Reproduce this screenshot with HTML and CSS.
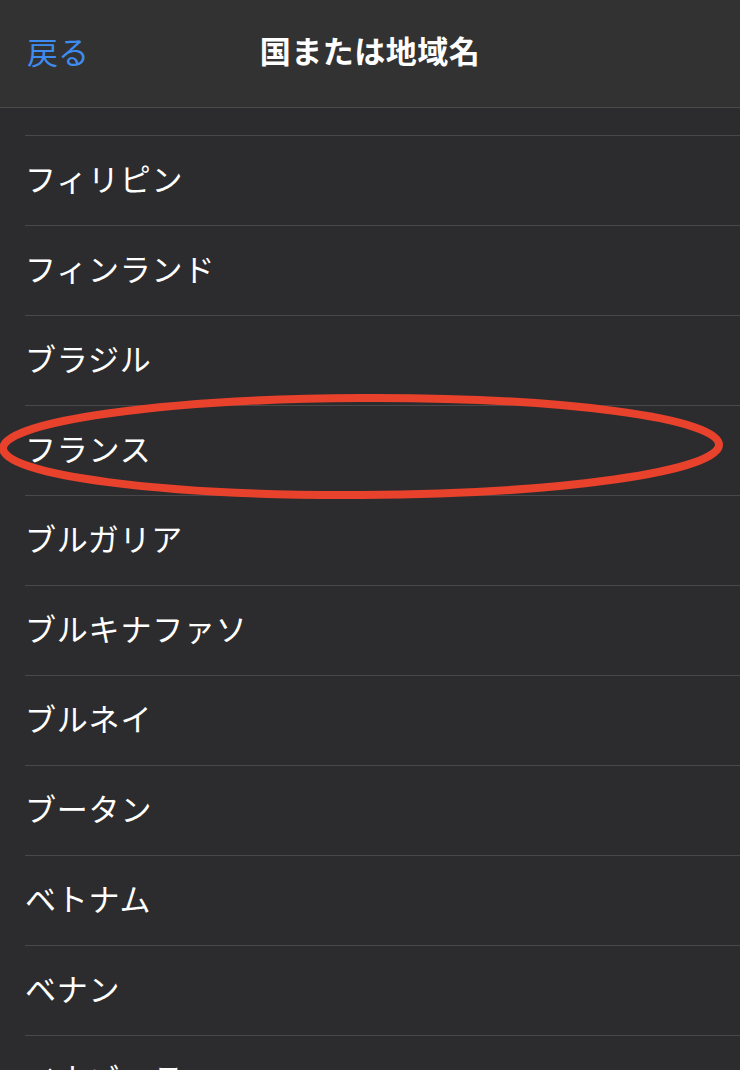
FILE: index.html
```html
<!DOCTYPE html>
<html lang="ja">
<head>
    <meta charset="UTF-8">
    <meta name="viewport" content="width=device-width, initial-scale=1.0">
    <title>国または地域名</title>
    <link rel="stylesheet" href="styles.css">
</head>
<body>
    <div class="screen">
        <header class="nav-bar">
            <a class="back-link" href="#">戻る</a>
            <h1 class="nav-title">国または地域名</h1>
        </header>

        <ul class="country-list">
            <li class="country-row country-row-top"></li>
            <li class="country-row">フィリピン</li>
            <li class="country-row">フィンランド</li>
            <li class="country-row">ブラジル</li>
            <li class="country-row country-row-marked">
                フランス
                <svg class="mark" width="740" height="120" viewBox="0 0 740 120">
                    <ellipse cx="361" cy="54.5" rx="358" ry="48.5" fill="none" stroke="#e8412c" stroke-width="8" transform="rotate(-0.3 361 54.5)"/>
                </svg>
            </li>
            <li class="country-row">ブルガリア</li>
            <li class="country-row">ブルキナファソ</li>
            <li class="country-row">ブルネイ</li>
            <li class="country-row">ブータン</li>
            <li class="country-row">ベトナム</li>
            <li class="country-row">ベナン</li>
            <li class="country-row">ベネズエラ</li>
        </ul>
    </div>
</body>
</html>
```

FILE: styles.css
```css
body {
    margin: 0;
    padding: 0;
    background: #2c2c2e;
    font-family: "Noto Sans CJK JP", "Noto Sans", sans-serif;
    color: #fff;
    overflow: hidden;
}

.screen {
    width: 740px;
    height: 1070px;
    overflow: hidden;
}

.nav-bar {
    height: 108px;
    box-sizing: border-box;
    border-bottom: 1px solid #4b4b4d;
    background: #323232;
    display: flex;
    align-items: center;
    justify-content: center;
    position: relative;
}

.back-link {
    position: absolute;
    left: 27px;
    top: 30px;
    font-size: 31px;
    line-height: 42px;
    color: #3e8cf0;
    text-decoration: none;
}

.nav-title {
    margin: 0;
    margin-top: -8px;
    font-size: 31px;
    font-weight: bold;
    letter-spacing: 0.5px;
}

.country-list {
    list-style: none;
    margin: 0;
    padding: 0 0 0 25px;
}

.country-row {
    height: 90px;
    box-sizing: border-box;
    border-bottom: 1px solid #48484a;
    display: flex;
    align-items: center;
    padding-bottom: 6px;
    font-size: 31px;
    letter-spacing: 0.8px;
    position: relative;
}

.country-row-top {
    height: 28px;
    padding-bottom: 0;
}

.mark {
    position: absolute;
    left: -25px;
    top: -14px;
    pointer-events: none;
}
```
